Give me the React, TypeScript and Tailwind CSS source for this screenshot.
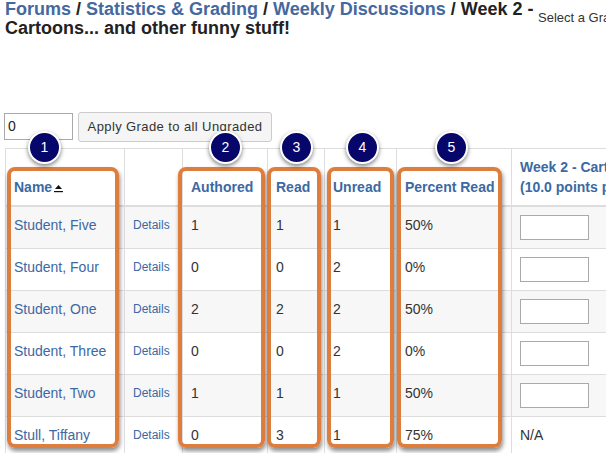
import React from 'react';

const rows = [
  { name: 'Student, Five', authored: 1, read: 1, unread: 1, pct: '50%', input: true },
  { name: 'Student, Four', authored: 0, read: 0, unread: 2, pct: '0%', input: true },
  { name: 'Student, One', authored: 2, read: 2, unread: 2, pct: '50%', input: true },
  { name: 'Student, Three', authored: 0, read: 0, unread: 2, pct: '0%', input: true },
  { name: 'Student, Two', authored: 1, read: 1, unread: 1, pct: '50%', input: true },
  { name: 'Stull, Tiffany', authored: 0, read: 3, unread: 1, pct: '75%', input: false }
];

// callout boxes drawn over the table
const boxes = [
  { left: 'left-[7px]', width: 'w-[112px]' },
  { left: 'left-[178px]', width: 'w-[87px]' },
  { left: 'left-[267px]', width: 'w-[54px]' },
  { left: 'left-[327px]', width: 'w-[67px]' },
  { left: 'left-[397px]', width: 'w-[105px]' }
];

const badges = [
  { n: 1, left: 'left-[28px]' },
  { n: 2, left: 'left-[209px]' },
  { n: 3, left: 'left-[280px]' },
  { n: 4, left: 'left-[346px]' },
  { n: 5, left: 'left-[435px]' }
];

function SortIcon() {
  return (
    <svg width="9" height="8" viewBox="0 0 9 8" className="inline-block ml-[2px] align-[-1px]">
      <polygon points="4.5,0 8,4 1,4" fill="#111" />
      <rect x="0" y="6" width="9" height="1.2" fill="#111" />
    </svg>
  );
}

export default function App() {
  return (
    <div
      className="relative w-[606px] h-[453px] overflow-hidden bg-white text-[#333]"
      style={{ fontFamily: '"Liberation Sans", Arial, sans-serif' }}
    >
      <div className="flex items-start">
        <h1 className="w-[533px] shrink-0 pl-[5px] whitespace-nowrap text-[18px] leading-[19px] font-bold text-[#222]">
          <a className="text-[#44689f]">Forums</a> / <a className="text-[#44689f]">Statistics &amp; Grading</a> /{' '}
          <a className="text-[#44689f]">Weekly Discussions</a> / Week 2 -
          <br />
          Cartoons... and other funny stuff!
        </h1>
        <span className="mt-[10px] ml-[5px] whitespace-nowrap text-[13px] leading-[15px] text-[#333]">
          Select a Gradebook Item
        </span>
      </div>

      <div className="mt-[75px] ml-[4px] flex items-start gap-[5px]">
        <div className="w-[69px] h-[27px] border border-[#a9a9a9] pl-[3px] text-[14px] leading-[25px] text-[#222]">
          0
        </div>
        <button className="-mt-[1px] w-[194px] h-[30px] rounded-[3px] border border-[#ccc] bg-[#f5f5f5] text-[13px] tracking-[0.4px] text-[#333]">
          Apply Grade to all Ungraded
        </button>
      </div>

      <table className="mt-[6px] ml-[5px] table-fixed border-collapse w-[760px] text-[14px] leading-5 text-[#333]">
        <colgroup>
          <col className="w-[119px]" />
          <col className="w-[58px]" />
          <col className="w-[85px]" />
          <col className="w-[57px]" />
          <col className="w-[72px]" />
          <col className="w-[115px]" />
          <col className="w-[254px]" />
        </colgroup>
        <thead>
          <tr className="text-left text-[#3b69a3] font-bold">
            <th className="border border-[#ddd] border-b-2 px-[8px] py-[8px] align-bottom whitespace-nowrap">
              Name
              <SortIcon />
            </th>
            <th className="border border-[#ddd] border-b-2 px-[8px] py-[8px] align-bottom"></th>
            <th className="border border-[#ddd] border-b-2 px-[8px] py-[8px] align-bottom">Authored</th>
            <th className="border border-[#ddd] border-b-2 px-[8px] py-[8px] align-bottom">Read</th>
            <th className="border border-[#ddd] border-b-2 px-[8px] py-[8px] align-bottom">Unread</th>
            <th className="border border-[#ddd] border-b-2 px-[8px] py-[8px] align-bottom whitespace-nowrap">
              Percent Read
            </th>
            <th className="border border-[#ddd] border-b-2 px-[8px] py-[8px] align-bottom whitespace-nowrap">
              Week 2 - Cartoons... and other funny stuff!
              <br />
              (10.0 points possible)
            </th>
          </tr>
        </thead>
        <tbody>
          {rows.map((r, i) => (
            <tr key={r.name} className={i % 2 === 0 ? 'bg-[#f7f7f7]' : 'bg-white'}>
              <td className="border border-[#ddd] px-[8px] py-[8px] align-top text-[#3d68a2] whitespace-nowrap">
                {r.name}
              </td>
              <td className="border border-[#ddd] px-[8px] py-[8px] align-top text-[12px] text-[#3d68a2]">
                Details
              </td>
              <td className="border border-[#ddd] px-[8px] py-[8px] align-top">{r.authored}</td>
              <td className="border border-[#ddd] px-[8px] py-[8px] align-top">{r.read}</td>
              <td className="border border-[#ddd] px-[8px] py-[8px] align-top">{r.unread}</td>
              <td className="border border-[#ddd] px-[8px] py-[8px] align-top">{r.pct}</td>
              <td className="border border-[#ddd] px-[8px] py-[8px] align-top">
                {r.input ? (
                  <div className="w-[69px] h-[25px] border border-[#a9a9a9] bg-white" />
                ) : (
                  'N/A'
                )}
              </td>
            </tr>
          ))}
        </tbody>
      </table>

      {boxes.map((b, i) => (
        <div
          key={i}
          className={`absolute top-[167px] h-[281px] ${b.left} ${b.width} rounded-[8px] border-[4px] border-[#de7e3e] shadow-[1px_3px_4px_rgba(0,0,0,0.45)]`}
        />
      ))}

      {badges.map((b) => (
        <div
          key={b.n}
          className={`absolute top-[131px] ${b.left} w-[33px] h-[33px] rounded-full border-2 border-white bg-[#07076b] shadow-[0_2px_4px_rgba(0,0,0,0.5)] flex items-center justify-center text-[14px] text-white`}
        >
          {b.n}
        </div>
      ))}
    </div>
  );
}
